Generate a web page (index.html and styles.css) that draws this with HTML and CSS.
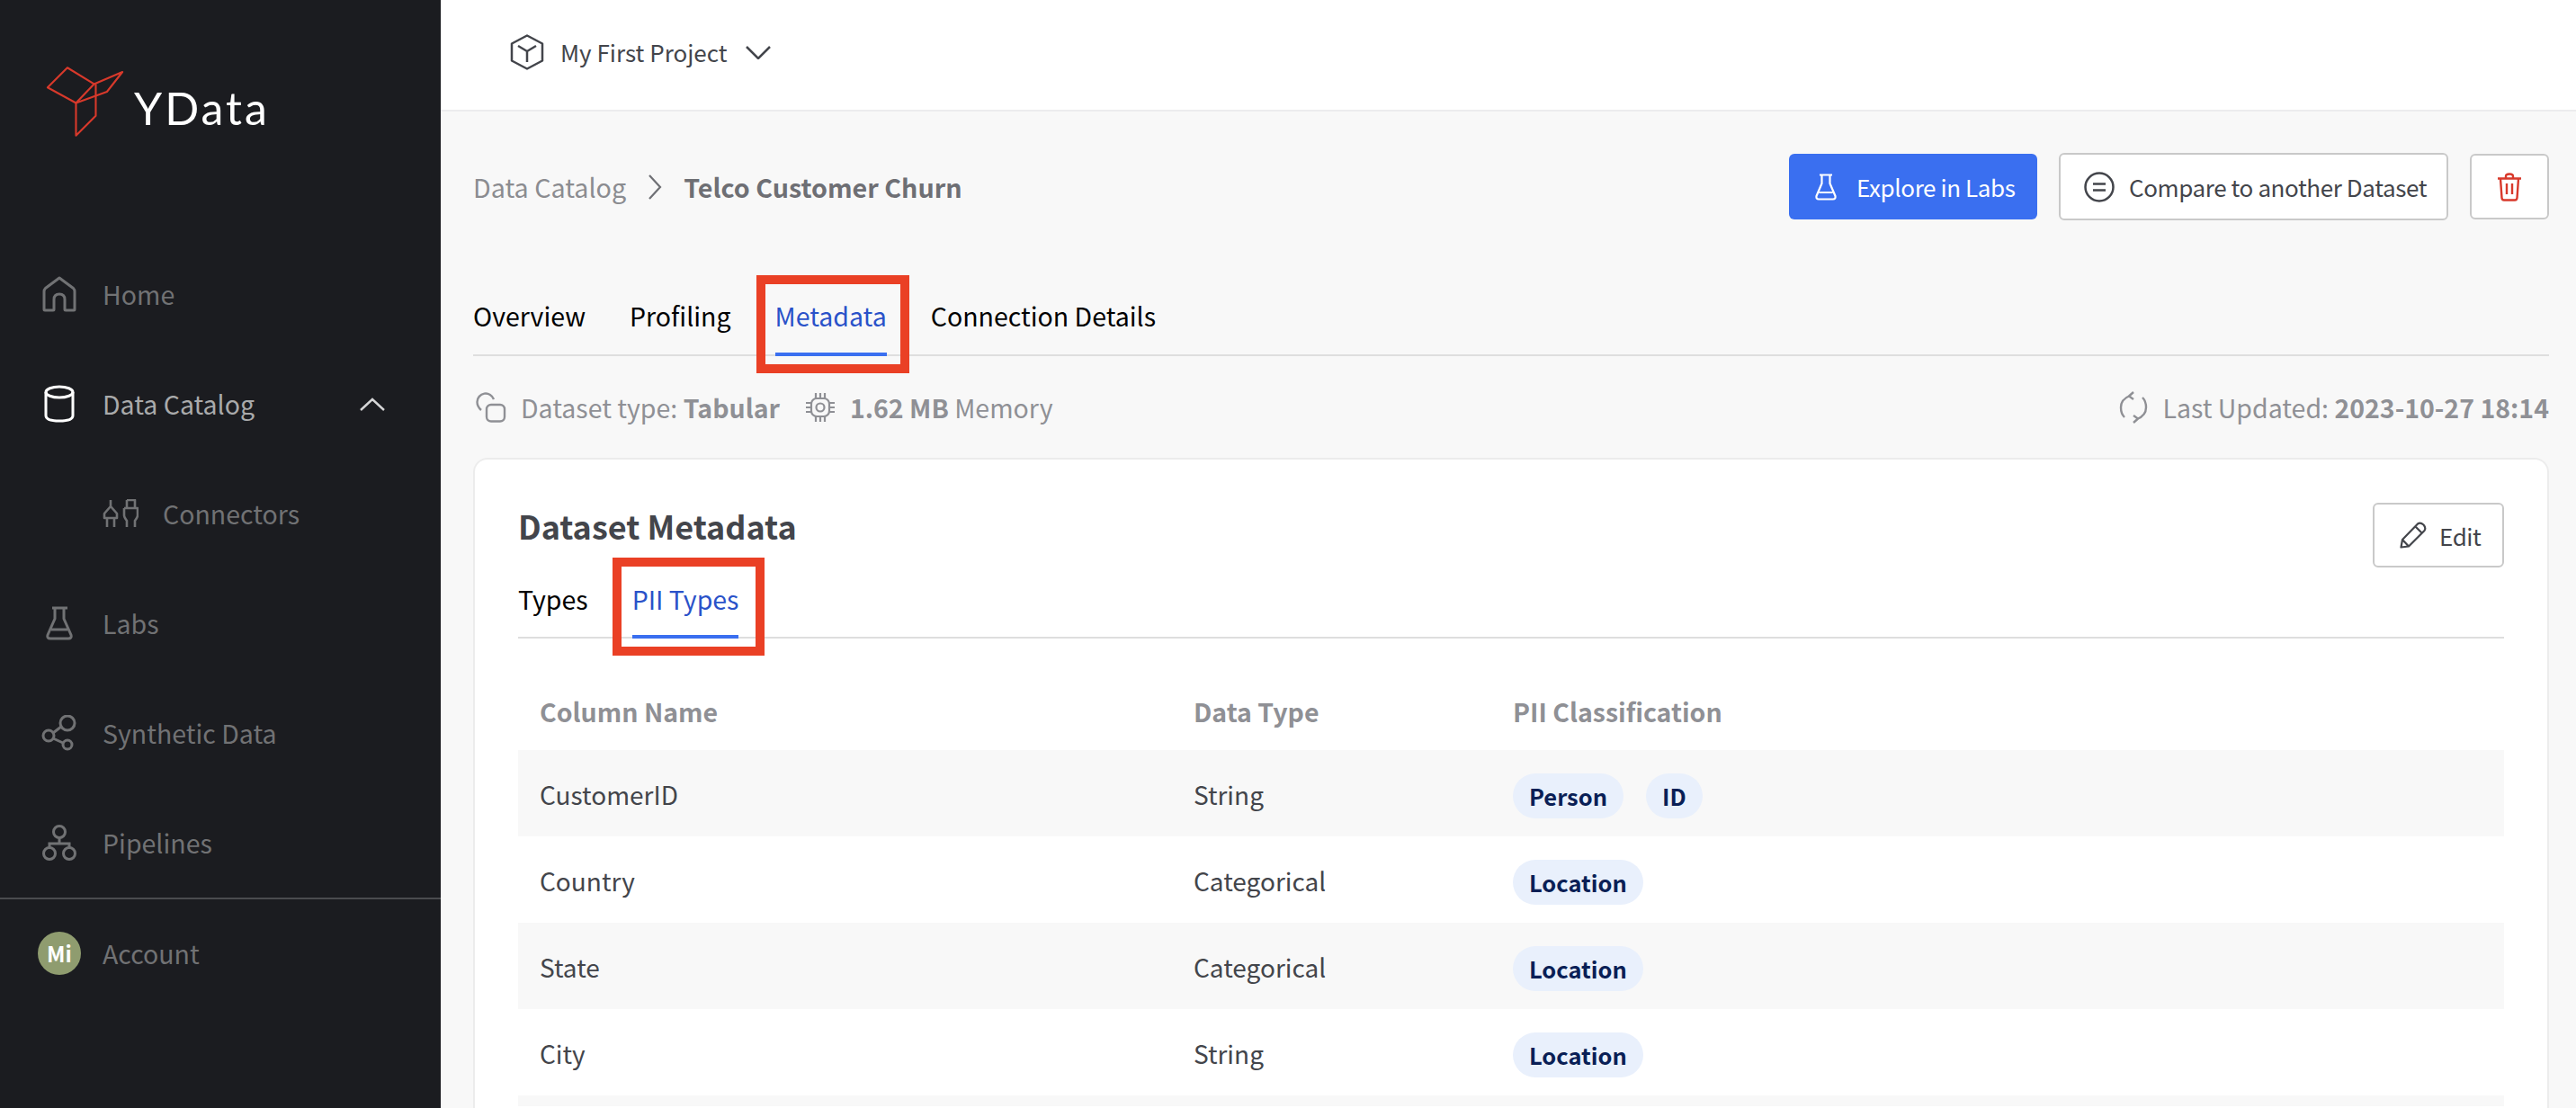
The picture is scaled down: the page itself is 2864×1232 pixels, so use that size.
FILE: index.html
```html
<!DOCTYPE html>
<html lang="en">
<head>
    <meta charset="UTF-8">
    <title>YData - Telco Customer Churn</title>
    <link rel="stylesheet" href="styles.css">
</head>
<body>
<div class="app">
    <!-- Sidebar -->
    <aside class="sidebar">
        <div class="brand">
            <svg class="brand-mark" viewBox="0 0 92 84" fill="none" stroke="#d8392b" stroke-width="2.2" stroke-linejoin="round">
                <path d="M2 25 25 2 56 21 35 43Z"/>
                <path d="M56 21 89 7 71 30 35 43"/>
                <path d="M35 43V81L58 58V21"/>
            </svg>
            <span class="brand-name">YData</span>
        </div>
        <nav class="nav">
            <a class="nav-item">
                <span class="nav-icon">
                    <svg width="38" height="40" viewBox="0 0 38 40" fill="none" stroke="currentColor" stroke-width="3" stroke-linejoin="round"><path d="M2 37V17Q2 15 3.500 13.500L19 2 34.500 13.500Q36 15 36 17V37Q36 38 35 38H26Q25 38 25 37V26Q25 20 19 20T13 26V37Q13 38 12 38H3Q2 38 2 37Z"/></svg>
                </span>
                Home
            </a>
            <a class="nav-item active">
                <span class="nav-icon">
                    <svg width="34" height="42" viewBox="0 0 34 42" fill="none" stroke="#fff" stroke-width="3"><ellipse cx="17" cy="8" rx="15" ry="6"/><path d="M2 8V34Q2 40 17 40T32 34V8"/></svg>
                </span>
                Data Catalog
                <svg class="nav-caret" width="28" height="15" viewBox="0 0 28 15" fill="none" stroke="#d5d5d6" stroke-width="2.400"><path d="M1 14 14 2 27 14"/></svg>
            </a>
            <a class="nav-item nav-sub">
                <svg width="40" height="32" viewBox="0 0 40 32" fill="none" stroke="currentColor" stroke-width="2.600" stroke-linejoin="round"><path d="M9 1V8L2 16V21H16V16L9 8V8M5 21V31M13 21V31"/><path d="M27 1H36V10M27 1V10M24 10H39V18Q39 20 36 24V31M24 10V18Q24 20 27 24V31"/></svg>
                Connectors
            </a>
            <a class="nav-item">
                <span class="nav-icon">
                    <svg width="30" height="38" viewBox="0 0 30 38" fill="none" stroke="currentColor" stroke-width="3" stroke-linejoin="round"><path d="M7 2H24M10 2V14L2 32Q1 36 5 36H25Q29 36 28 32L20 14V2M6 26H24"/></svg>
                </span>
                Labs
            </a>
            <a class="nav-item">
                <span class="nav-icon">
                    <svg width="40" height="40" viewBox="0 0 40 40" fill="none" stroke="currentColor" stroke-width="3"><circle cx="29" cy="9" r="8"/><circle cx="8" cy="23" r="6"/><circle cx="29" cy="33" r="5"/><path d="M13 20 22 13M13 26 24 31"/></svg>
                </span>
                Synthetic Data
            </a>
            <a class="nav-item">
                <span class="nav-icon">
                    <svg width="38" height="40" viewBox="0 0 38 40" fill="none" stroke="currentColor" stroke-width="3"><circle cx="19" cy="8" r="6.500"/><circle cx="8" cy="32" r="6.500"/><circle cx="30" cy="32" r="6.500"/><path d="M19 15V21M8 25V21H30V25"/></svg>
                </span>
                Pipelines
            </a>
        </nav>
        <a class="nav-item account">
            <span class="avatar">Mi</span>
            Account
        </a>
    </aside>

    <div class="main">
        <!-- Project bar -->
        <header class="topbar">
            <svg width="40" height="40" viewBox="0 0 40 40" fill="none" stroke="#43454b" stroke-width="2.500" stroke-linejoin="round"><path d="M20 1.500 37 10.500V29.500L20 38.500 3 29.500V10.500Z"/><path d="M10 13 20 19 30 13M20 19V31"/></svg>
            <span class="project-name">My First Project</span>
            <svg width="28" height="15" viewBox="0 0 28 15" fill="none" stroke="#43454b" stroke-width="2.500"><path d="M1 1 14 14 27 1"/></svg>
        </header>

        <div class="content">
            <div class="title-row">
                <div class="crumbs">
                    <span class="crumb">Data Catalog</span>
                    <svg width="16" height="28" viewBox="0 0 16 28" fill="none" stroke="#6e6f74" stroke-width="2.200"><path d="M2 1 14 14 2 27"/></svg>
                    <span class="crumb-current">Telco Customer Churn</span>
                </div>
                <div class="actions">
                    <button class="btn btn-primary">
                        <svg width="24" height="30" viewBox="0 0 24 30" fill="none" stroke="#fff" stroke-width="2.200" stroke-linejoin="round"><path d="M5 1.500H19M7.500 1.500V11L1.500 25Q1 28.500 4 28.500H20Q23 28.500 22.500 25L16.500 11V1.500M4.500 21H19.500"/></svg>
                        Explore in Labs
                    </button>
                    <button class="btn btn-compare">
                        <svg width="34" height="34" viewBox="0 0 34 34" fill="none" stroke="#43454b" stroke-width="2.500"><circle cx="17" cy="17" r="15.500"/><path d="M10 13.500H24M10 20.500H24"/></svg>
                        Compare to another Dataset
                    </button>
                    <button class="btn btn-delete">
                        <svg width="28" height="32" viewBox="0 0 28 32" fill="none" stroke="#d8392b" stroke-width="2.400" stroke-linejoin="round"><path d="M1 6.500H27M10 6.500V4Q10 1.500 14 1.500T18 4V6.500M4 6.500 5.500 28Q5.700 30.500 8 30.500H20Q22.300 30.500 22.500 28L24 6.500M11 12V24M17 12V24"/></svg>
                    </button>
                </div>
            </div>

            <div class="tabs main-tabs">
                <a class="tab">Overview</a>
                <a class="tab">Profiling</a>
                <a class="tab active">Metadata<span class="callout"></span></a>
                <a class="tab">Connection Details</a>
            </div>

            <div class="info-row">
                <span class="info">
                    <svg width="34" height="34" viewBox="0 0 34 34" fill="none" stroke="#8f9095" stroke-width="2.400"><path d="M6 20Q1.500 16 1.500 11A9.500 9.500 0 0 1 20 8"/><rect x="12" y="14" width="20" height="18.500" rx="5"/></svg>
                    <span>Dataset type: <b>Tabular</b></span>
                </span>
                <span class="info">
                    <svg width="34" height="34" viewBox="0 0 34 34" fill="none" stroke="#8f9095" stroke-width="2.200"><rect x="7" y="7" width="20" height="20" rx="6"/><circle cx="17" cy="17" r="4.500"/><path d="M12 1V7M17 1V7M22 1V7M12 27V33M17 27V33M22 27V33M1 12H7M1 17H7M1 22H7M27 12H33M27 17H33M27 22H33"/></svg>
                    <span><b>1.62 MB</b> Memory</span>
                </span>
                <span class="info updated">
                    <svg width="32" height="36" viewBox="0 0 32 36" fill="none" stroke="#8f9095" stroke-width="2.400"><path d="M6 29Q2 25 2 18 2 9 12 5M16 1 11 5.500 16 9M26 7Q30 11 30 18 30 27 20 31M16 35 21 30.500 16 27"/></svg>
                    <span>Last Updated: <b>2023-10-27 18:14</b></span>
                </span>
            </div>

            <section class="card">
                <div class="card-head">
                    <h2>Dataset Metadata</h2>
                    <button class="btn btn-edit">
                        <svg width="30" height="30" viewBox="0 0 30 30" fill="none" stroke="#43454b" stroke-width="2.200" stroke-linejoin="round"><path d="M1.500 28.500 3 20 20 2.500Q23 0.500 26.500 3.500 29.500 7 27.500 10L10 27.500ZM17.500 5.500 24.500 12.500M3 20 10 27.500"/></svg>
                        Edit
                    </button>
                </div>
                <div class="tabs sub-tabs">
                    <a class="tab">Types</a>
                    <a class="tab active">PII Types<span class="callout"></span></a>
                </div>
                <table class="pii-table">
                    <thead>
                        <tr><th>Column Name</th><th>Data Type</th><th>PII Classification</th></tr>
                    </thead>
                    <tbody>
                        <tr>
                            <td>CustomerID</td>
                            <td>String</td>
                            <td><span class="pill">Person</span><span class="pill">ID</span></td>
                        </tr>
                        <tr>
                            <td>Country</td>
                            <td>Categorical</td>
                            <td><span class="pill">Location</span></td>
                        </tr>
                        <tr>
                            <td>State</td>
                            <td>Categorical</td>
                            <td><span class="pill">Location</span></td>
                        </tr>
                        <tr>
                            <td>City</td>
                            <td>String</td>
                            <td><span class="pill">Location</span></td>
                        </tr>
                        <tr class="row-cut"><td></td><td></td><td></td></tr>
                    </tbody>
                </table>
            </section>
        </div>
    </div>
</div>
</body>
</html>
```

FILE: styles.css
```css
* {
    box-sizing: border-box;
}

html, body {
    height: 100%;
}

body {
    margin: 0;
    overflow: hidden;
    background: #f8f8f8;
    color: #43454b;
    font-family: "Noto Sans CJK SC", "Noto Sans", sans-serif;
    font-size: 28px;
    line-height: 40px;
}

.app {
    display: flex;
    height: 100vh;
}

/* Sidebar */
.sidebar {
    flex: 0 0 490px;
    background: #1b1c20;
    color: #717274;
    font-size: 28.5px;
}

.brand {
    display: flex;
    gap: 10px;
    height: 266px;
    padding: 73px 0 0 51px;
}

.brand-mark {
    width: 88px;
    height: 81px;
}

.brand-name {
    margin-top: 22px;
    color: #fff;
    font-family: Lato, sans-serif;
    font-size: 50px;
    letter-spacing: 3px;
    line-height: 50px;
}

.nav {
    display: flex;
    flex-direction: column;
    border-bottom: 2px solid #4a4b4e;
}

.nav-item {
    display: flex;
    align-items: center;
    gap: 24px;
    height: 122px;
    padding-left: 42px;
}

.nav-item.active {
    color: #a9aaab;
}

.nav-icon {
    display: flex;
    justify-content: center;
    width: 48px;
}

.nav-caret {
    margin-left: auto;
    margin-right: 62px;
}

.nav-sub {
    gap: 27px;
    padding-left: 114px;
}

.account {
    height: 120px;
}

.avatar {
    display: flex;
    align-items: center;
    justify-content: center;
    width: 48px;
    height: 48px;
    border-radius: 50%;
    background: #8f9c6f;
    color: #fff;
    font-size: 24px;
    font-weight: 700;
}

/* Main area */
.main {
    flex: 1;
    min-width: 0;
    display: flex;
    flex-direction: column;
}

.topbar {
    display: flex;
    align-items: center;
    flex: 0 0 124px;
    padding: 0 0 6px 76px;
    background: #fff;
    border-bottom: 2px solid #ececee;
}

.project-name {
    margin: 0 20px 0 17px;
    font-size: 26px;
}

.content {
    flex: 1;
    min-height: 0;
    display: flex;
    flex-direction: column;
    padding: 46px 30px 0 36px;
}

.title-row {
    display: flex;
    align-items: center;
    justify-content: space-between;
    flex: 0 0 75px;
}

.crumbs {
    display: flex;
    align-items: center;
    gap: 24px;
    font-size: 28.7px;
    color: #8b8c90;
}

.crumb-current {
    color: #6e6f74;
    font-weight: 700;
}

.actions {
    display: flex;
    align-items: center;
    gap: 24px;
}

.btn {
    display: flex;
    align-items: center;
    height: 73px;
    padding: 0;
    border: 2px solid #c9c9c9;
    border-radius: 6px;
    background: #fff;
    color: #43454b;
    font-family: inherit;
    font-size: 26px;
    letter-spacing: -0.4px;
    white-space: nowrap;
}

.btn-primary {
    gap: 22px;
    width: 276px;
    padding-left: 29px;
    border: 0;
    background: #3a6ff0;
    color: #fff;
}

.btn-compare {
    gap: 16px;
    width: 433px;
    height: 75px;
    padding-left: 26px;
}

.btn-delete {
    justify-content: center;
    width: 88px;
}

.btn-edit {
    gap: 14px;
    width: 146px;
    height: 72px;
    padding-left: 28px;
}

/* Tabs */
.tabs {
    display: flex;
    gap: 49px;
    border-bottom: 2px solid #dedede;
    color: #000;
    font-size: 28.5px;
}

.main-tabs {
    flex: 0 0 100px;
    margin-top: 51px;
}

.sub-tabs {
    height: 72px;
    margin-top: 7px;
}

.tab {
    position: relative;
    padding-top: 35px;
    margin-bottom: -2px;
}

.sub-tabs .tab {
    padding-top: 8px;
}

.tab.active {
    color: #2a52c9;
    border-bottom: 4px solid #3a6ff0;
}

/* red annotation frame drawn over the selected tab */
.callout {
    position: absolute;
    border: 10px solid #ea4025;
    pointer-events: none;
}

.main-tabs .callout {
    inset: 10px -25px -23px -21px;
}

.sub-tabs .callout {
    inset: -18px -29px -23px -22px;
}

.info-row {
    display: flex;
    align-items: center;
    gap: 28px;
    flex: 0 0 113px;
    color: #8f9095;
    font-size: 28.5px;
}

.info {
    display: flex;
    align-items: center;
    gap: 16px;
}

.info:first-child svg {
    margin-left: 3px;
}

.info b {
    font-weight: 700;
}

.updated {
    margin-left: auto;
}

/* Card */
.card {
    flex: 1;
    min-height: 0;
    padding: 48px 48px 0;
    background: #fff;
    border: 2px solid #ececec;
    border-bottom: 0;
    border-radius: 16px 16px 0 0;
}

.card-head {
    display: flex;
    align-items: flex-start;
    justify-content: space-between;
    height: 72px;
}

.card-head h2 {
    margin: 0;
    color: #43454b;
    font-size: 36px;
    font-weight: 700;
    line-height: 50px;
}

.pii-table {
    width: 100%;
    margin-top: 40px;
    border-collapse: collapse;
    table-layout: fixed;
}

.pii-table th {
    height: 84px;
    padding: 0 0 3px 24px;
    color: #8f9095;
    font-weight: 700;
    font-size: 28.5px;
    text-align: left;
}

.pii-table th:nth-child(1) {
    width: 727px;
}

.pii-table th:nth-child(2) {
    width: 355px;
}

.pii-table td {
    height: 96px;
    padding: 1px 0 0 24px;
}

.pii-table tbody tr:nth-child(odd) {
    background: #f8f8f8;
}

/* next row, only its first pixels are in the window */
.pii-table .row-cut td {
    height: 12px;
    padding: 0;
}

.pill {
    display: inline-block;
    height: 50px;
    margin: 4px 25px 0 0;
    padding: 0 18px;
    border-radius: 25px;
    background: #e9f0fc;
    color: #0a1f56;
    font-size: 25.5px;
    font-weight: 700;
    line-height: 50px;
    vertical-align: middle;
}
```
